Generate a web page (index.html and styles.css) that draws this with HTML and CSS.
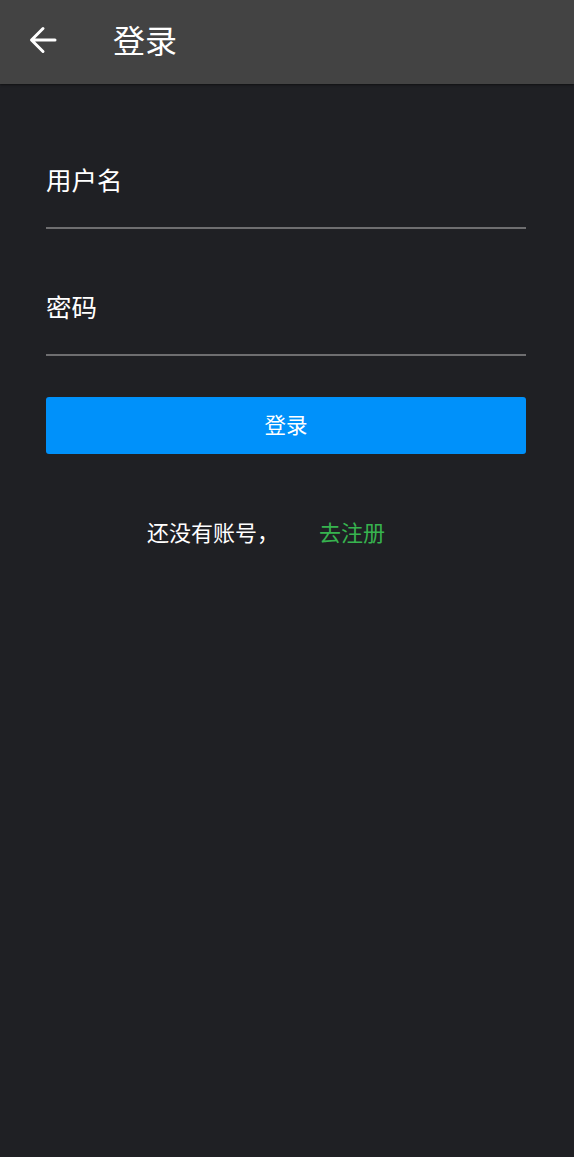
FILE: index.html
```html
<!DOCTYPE html>
<html lang="zh-CN">
<head>
<meta charset="utf-8">
<link rel="stylesheet" href="styles.css">
</head>
<body>
<header class="topbar">
  <span class="back">
    <svg width="28" height="28" viewBox="0 0 28 28"><path d="M26 14H3M14 2.5L2.5 14L14 25.5" fill="none" stroke="#fff" stroke-width="3" stroke-linecap="round" stroke-linejoin="round"/></svg>
  </span>
  <span class="title">登录</span>
</header>
<main class="form">
  <div class="field"><span class="label">用户名</span></div>
  <div class="field"><span class="label">密码</span></div>
  <button class="btn">登录</button>
  <div class="register">
    <span class="hint">还没有账号，</span>
    <span class="link">去注册</span>
  </div>
</main>
</body>
</html>
```
FILE: styles.css
```css
html, body {
  margin: 0;
  padding: 0;
  background: #1f2024;
  height: 100%;
}
body {
  font-family: "Noto Sans CJK SC", "Noto Sans", sans-serif;
  color: #fff;
}
.topbar {
  height: 84px;
  background: #434343;
  display: flex;
  align-items: center;
  box-shadow: 0 1px 2px rgba(0,0,0,0.5);
}
.back {
  width: 28px;
  height: 28px;
  margin-left: 29px;
  margin-top: -4px;
  display: flex;
}
.title {
  margin-left: 56px;
  font-size: 32px;
  line-height: 40px;
  margin-top: -6px;
}
.form {
  padding: 18px 48px 0 46px;
  display: flex;
  flex-direction: column;
}
.field {
  padding-top: 60px;
  padding-bottom: 29px;
  border-bottom: 2px solid #6e6e70;
}
.label {
  display: block;
  font-size: 25.5px;
  line-height: 34px;
  padding-bottom: 2px;
}
.btn {
  margin-top: 41px;
  height: 57px;
  border: none;
  border-radius: 3px;
  background: #0091fa;
  color: #fff;
  font-family: inherit;
  font-size: 21.5px;
  padding: 0 0 5px;
}
.register {
  margin-top: 61px;
  display: flex;
  padding-left: 101px;
  font-size: 22px;
  line-height: 32px;
}
.hint {
  color: #fff;
}
.link {
  margin-left: 40px;
  color: #37b34f;
}
```
